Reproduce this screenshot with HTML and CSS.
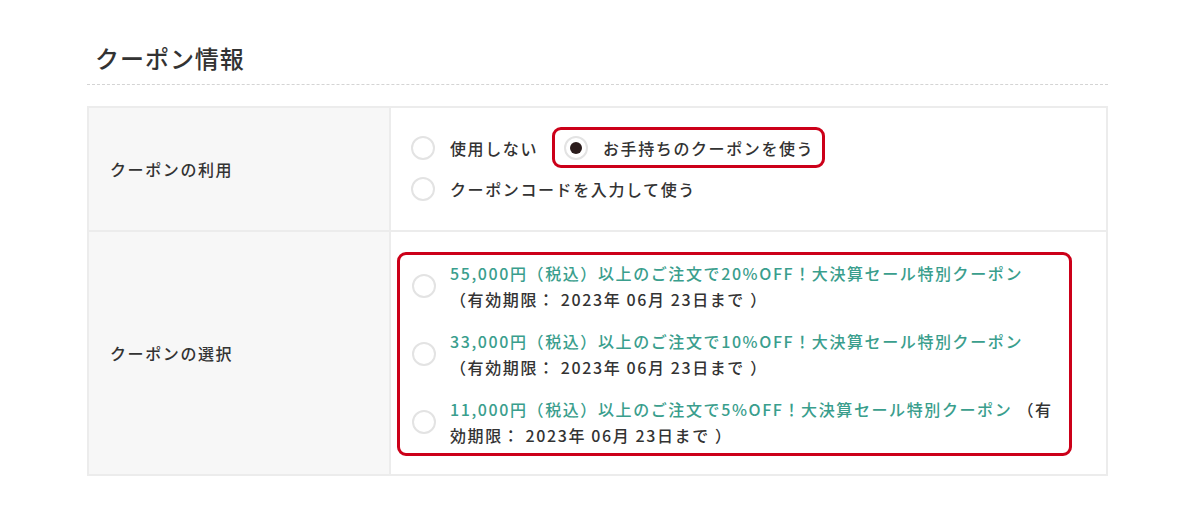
FILE: index.html
```html
<!DOCTYPE html>
<html lang="ja">
<head>
    <meta charset="UTF-8">
    <meta name="viewport" content="width=device-width, initial-scale=1.0">
    <title>クーポン情報</title>
    <link rel="stylesheet" href="styles.css">
</head>
<body>
    <div class="container">
        <h2 class="title">クーポン情報</h2>

        <div class="coupon-table">
            <!-- クーポンの利用 -->
            <div class="row">
                <div class="head">クーポンの利用</div>
                <div class="cell use-cell">
                    <div class="opt-list">
                        <label class="opt">
                            <input type="radio" name="use">
                            <span class="text">使用しない</span>
                        </label>
                        <label class="opt selected">
                            <input type="radio" name="use" checked>
                            <span class="text">お手持ちのクーポンを使う</span>
                        </label>
                        <label class="opt">
                            <input type="radio" name="use">
                            <span class="text">クーポンコードを入力して使う</span>
                        </label>
                    </div>
                </div>
            </div>

            <!-- クーポンの選択 -->
            <div class="row">
                <div class="head">クーポンの選択</div>
                <div class="cell">
                    <div class="coupon-box">
                        <label class="coupon">
                            <input type="radio" name="coupon">
                            <span class="text"><span class="name">55,000円（税込）以上のご注文で20%OFF！大決算セール特別クーポン</span> （有効期限： 2023年 06月 23日まで ）</span>
                        </label>
                        <label class="coupon">
                            <input type="radio" name="coupon">
                            <span class="text"><span class="name">33,000円（税込）以上のご注文で10%OFF！大決算セール特別クーポン</span> （有効期限： 2023年 06月 23日まで ）</span>
                        </label>
                        <label class="coupon">
                            <input type="radio" name="coupon">
                            <span class="text"><span class="name">11,000円（税込）以上のご注文で5%OFF！大決算セール特別クーポン</span> （有効期限： 2023年 06月 23日まで ）</span>
                        </label>
                    </div>
                </div>
            </div>
        </div>
    </div>
</body>
</html>
```

FILE: styles.css
```css
* {
    margin: 0;
    padding: 0;
    box-sizing: border-box;
}

body {
    font-family: "Noto Sans CJK JP", "Noto Sans", sans-serif;
    color: #333;
    background: #fff;
}

.container {
    width: 1021px;
    margin-left: 87px;
    padding-top: 40px;
}

.title {
    font-size: 24px;
    font-weight: 500;
    line-height: 36px;
    letter-spacing: 0.04em;
    padding: 0 0 8px 8px;
    border-bottom: 1px dashed #d4d4d4;
}

.coupon-table {
    margin-top: 21px;
    border: 2px solid #ececec;
}

.row {
    display: grid;
    grid-template-columns: 302px 1fr;
}

.row + .row {
    border-top: 2px solid #ececec;
}

.head {
    display: flex;
    align-items: center;
    padding-left: 21px;
    background-color: #f7f7f7;
    border-right: 2px solid #ececec;
    font-size: 16px;
    font-weight: 500;
    letter-spacing: 0.1em;
}

.cell {
    padding: 20px 34px 18px 6px;
    font-size: 16px;
    font-weight: 500;
    letter-spacing: 0.1em;
}

.use-cell {
    padding: 19px 20px 21px 8px;
}

/* ラジオボタン */
input[type="radio"] {
    appearance: none;
    flex: none;
    width: 24px;
    height: 24px;
    border: 2px solid #e3e3e3;
    border-radius: 50%;
    background: #fff;
    display: grid;
    place-items: center;
}

input[type="radio"]:checked::before {
    content: "";
    width: 12px;
    height: 12px;
    border-radius: 50%;
    background-color: #2b1c1c;
}

.opt-list {
    display: flex;
    flex-wrap: wrap;
    column-gap: 3px;
}

.opt {
    display: flex;
    align-items: center;
    gap: 15px;
    height: 41px;
    padding: 0 8px 0 9px;
    border: 3px solid transparent;
    border-radius: 9px;
}

.opt:nth-child(3) {
    flex-basis: 100%;
}

.opt.selected {
    border-color: #cc0019;
}

.coupon-box {
    display: flex;
    flex-direction: column;
    gap: 16px;
    padding: 5px 10px 5px 12px;
    border: 3px solid #cc0019;
    border-radius: 9px;
}

.coupon {
    display: flex;
    align-items: center;
    gap: 14px;
    line-height: 26px;
}

.coupon .name {
    color: #3a9e8d;
}
```
